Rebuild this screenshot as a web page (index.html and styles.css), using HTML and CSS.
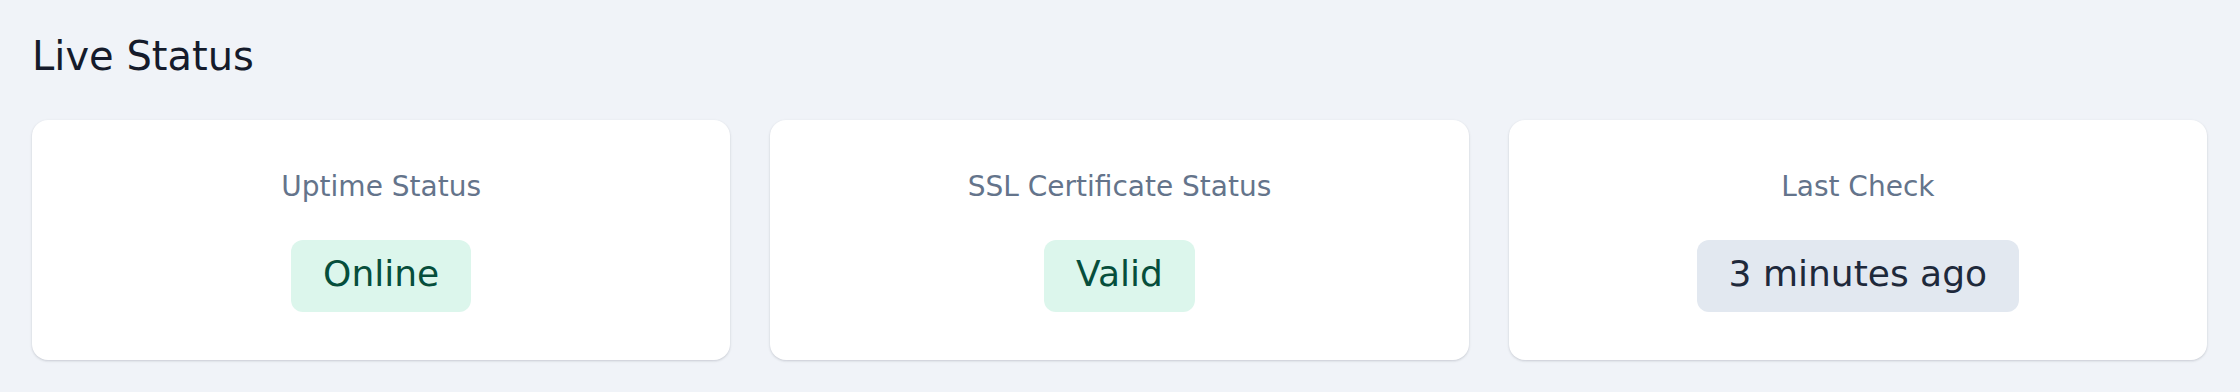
FILE: index.html
```html
<!DOCTYPE html>
<html lang="en">
<head>
<meta charset="utf-8">
<title>Live Status</title>
<link rel="stylesheet" href="styles.css">
</head>
<body>
<main class="page">
  <h2 class="title">Live Status</h2>
  <section class="cards">
    <div class="card">
      <div class="label">Uptime Status</div>
      <span class="badge badge-green">Online</span>
    </div>
    <div class="card">
      <div class="label">SSL Certificate Status</div>
      <span class="badge badge-green">Valid</span>
    </div>
    <div class="card">
      <div class="label">Last Check</div>
      <span class="badge badge-gray">3 minutes ago</span>
    </div>
  </section>
</main>
</body>
</html>
```
FILE: styles.css
```css
* { box-sizing: border-box; }
html, body {
  margin: 0;
  padding: 0;
  background: #f0f3f8;
  font-family: "DejaVu Sans", sans-serif;
}
.page {
  padding: 32px 33px 32px 32px;
}
.title {
  margin: 0 0 40px 0;
  font-size: 40px;
  line-height: 48px;
  font-weight: 400;
  color: #151b2b;
}
.cards {
  display: grid;
  grid-template-columns: repeat(3, 1fr);
  gap: 40px;
}
.card {
  background: #ffffff;
  border-radius: 16px;
  box-shadow: 0 1px 3px rgba(15, 23, 42, 0.12), 0 1px 2px rgba(15, 23, 42, 0.06);
  padding: 48px 24px;
  display: flex;
  flex-direction: column;
  align-items: center;
}
.label {
  font-size: 28px;
  line-height: 38px;
  color: #64748b;
  margin-bottom: 34px;
}
.badge {
  display: inline-block;
  font-size: 36px;
  line-height: 40px;
  padding: 14px 32px 18px;
  border-radius: 12px;
}
.badge-green {
  background: #dcf6ec;
  color: #064e3b;
}
.badge-gray {
  background: #e2e8f0;
  color: #1e293b;
}
```
